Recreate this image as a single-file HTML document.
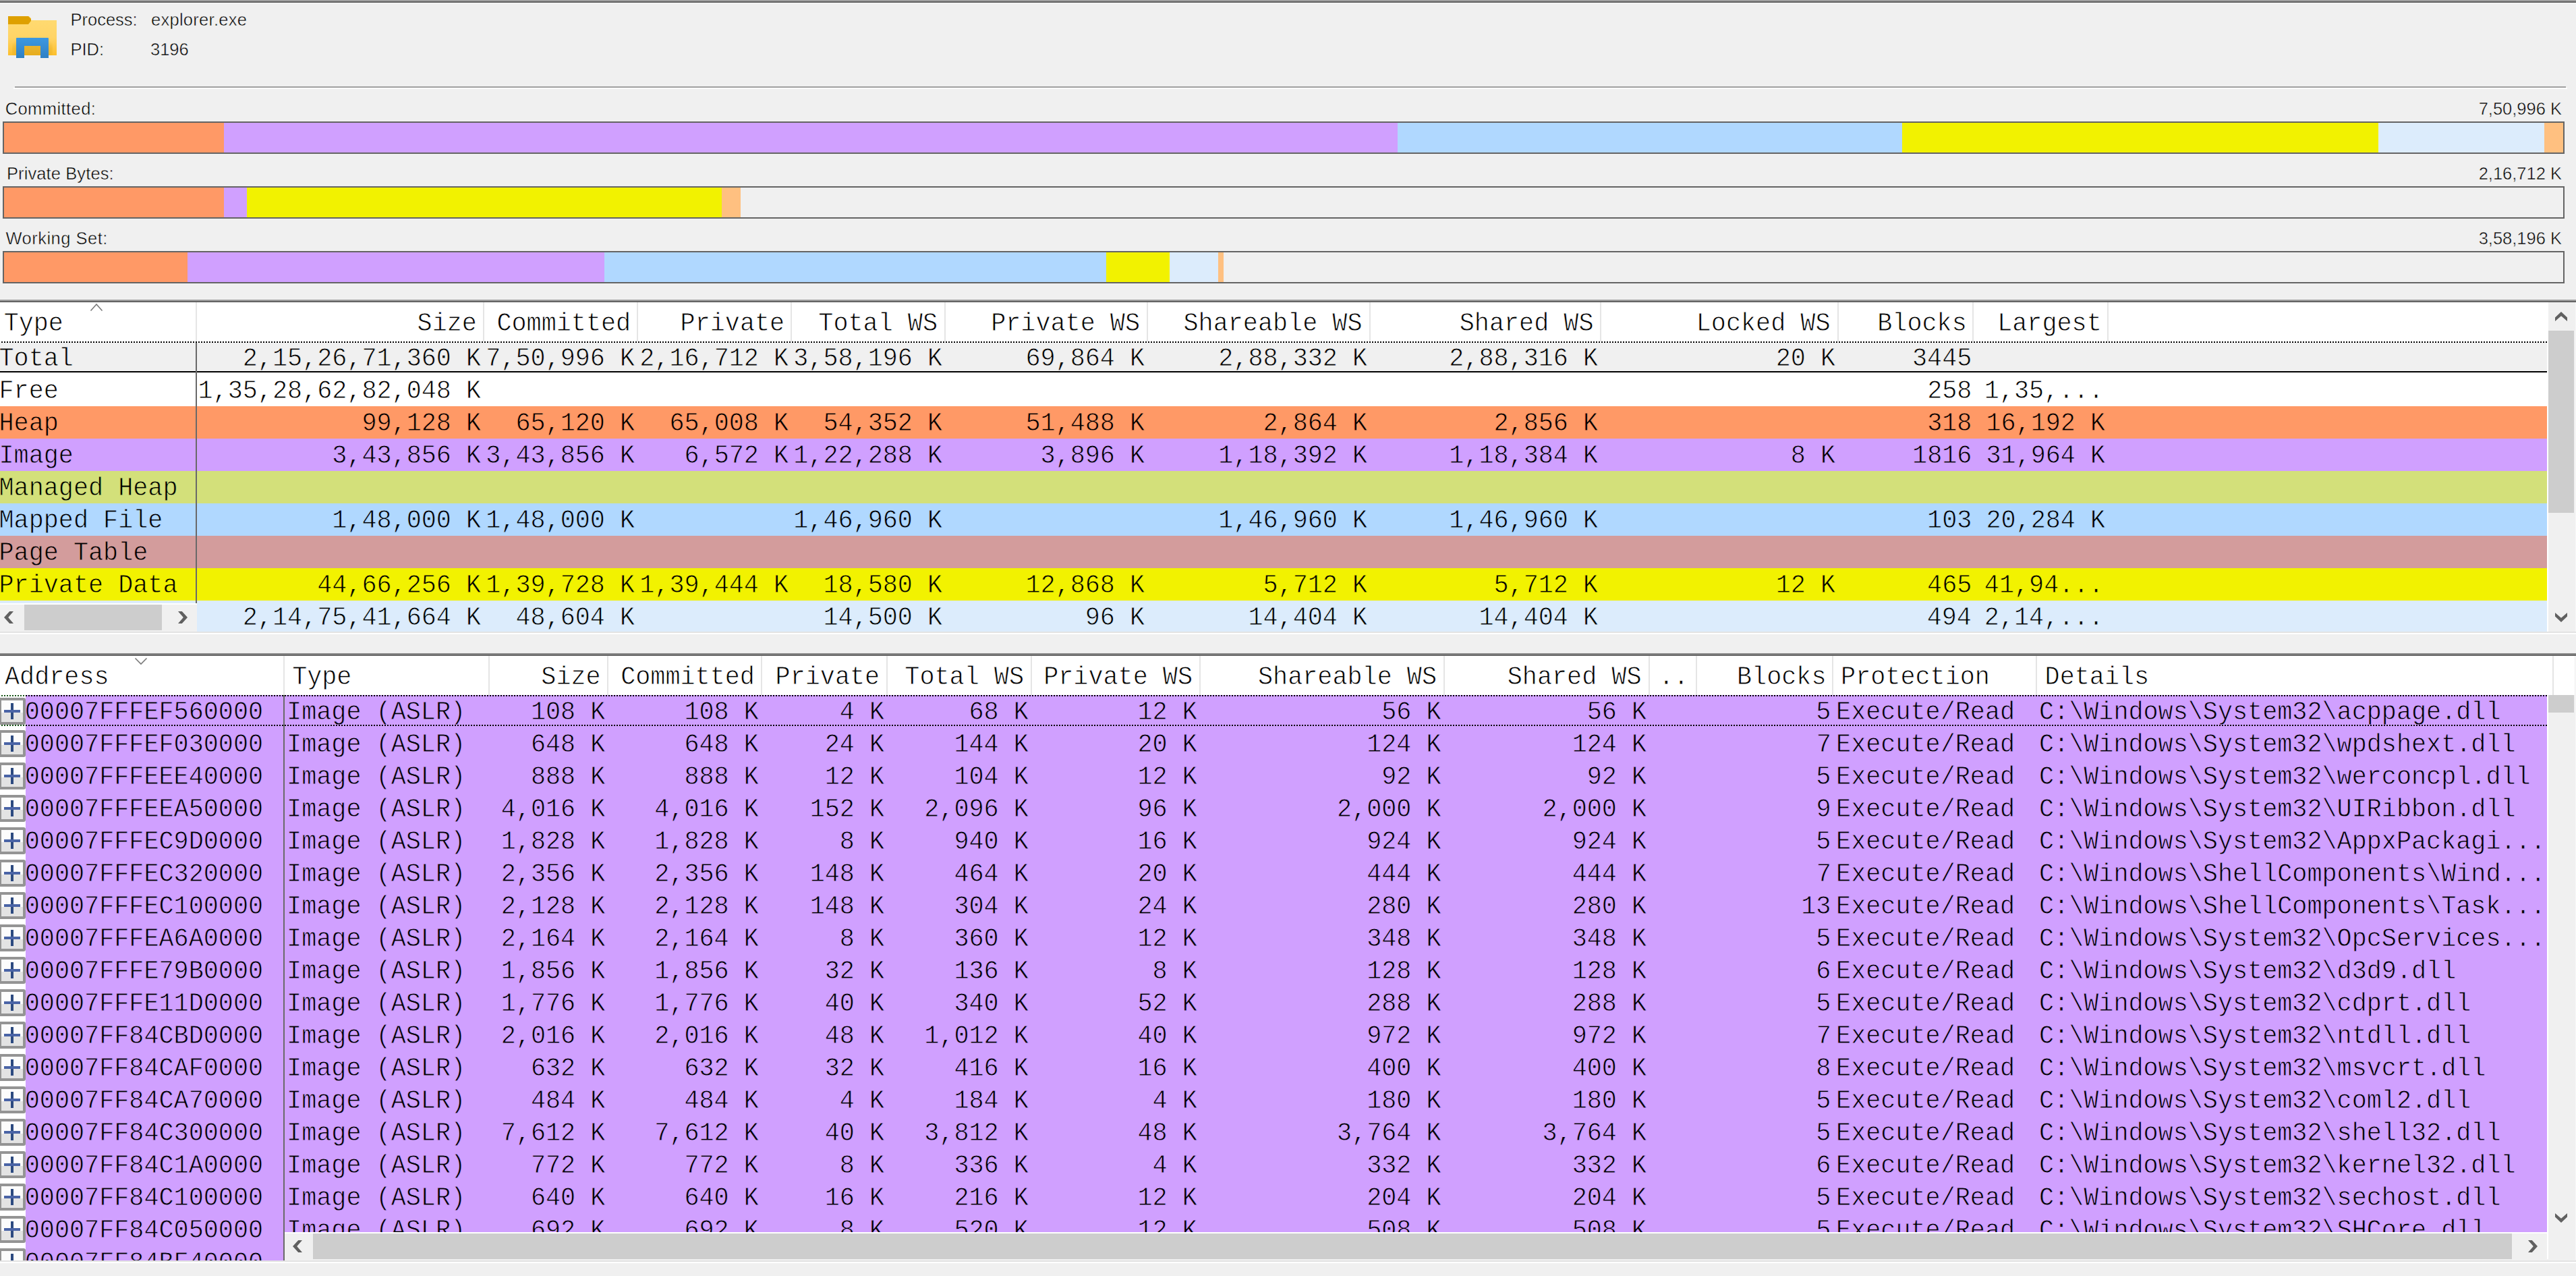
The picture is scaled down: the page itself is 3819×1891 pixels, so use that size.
<!DOCTYPE html>
<html><head><meta charset="utf-8"><title>VMMap</title><style>
html,body{margin:0;padding:0;}
body{width:3819px;height:1891px;overflow:hidden;position:relative;background:#f0f0f0;}
.r{position:absolute;}
.clip{position:absolute;overflow:hidden;}
.m{position:absolute;font-family:"Liberation Mono",monospace;font-size:36.8px;line-height:48px;height:48px;white-space:pre;color:#000;transform:scaleY(1.065);-webkit-text-stroke:0.75px var(--bg,#fff);transform-origin:0 33.79px;}
.s{position:absolute;font-family:"Liberation Sans",sans-serif;font-size:25.5px;line-height:30px;height:30px;white-space:pre;color:#000;-webkit-text-stroke:0.5px #f0f0f0;}
.dot{position:absolute;height:2px;background-image:linear-gradient(to right,#000 0,#000 2px,transparent 2px,transparent 4px);background-size:4px 2px;background-position:2px 0;}
.exp{position:absolute;width:40px;height:40px;box-sizing:border-box;border:4px solid #949494;border-radius:3px;background:linear-gradient(#fcfcfc 0,#fcfcfc 55%,#e3e3e3 55%,#e3e3e3 100%);}
.exp i{position:absolute;display:block;}
.exp .h{left:4px;top:14px;width:24px;height:4px;background:#4a64a6;}
.exp .v{left:14px;top:4px;width:4px;height:24px;background:#2c4a80;}
</style></head>
<body>
<div class="r" style="left:0px;top:0px;width:3819px;height:2px;background:#a0a0a0;"></div>
<div class="r" style="left:0px;top:2px;width:3819px;height:2px;background:#606060;"></div>
<div class="r" style="left:0px;top:4px;width:3819px;height:1px;background:#f8f8f8;"></div>
<svg class="r" style="left:0px;top:0px" width="100" height="100" viewBox="0 0 100 100">
<defs>
<linearGradient id="fb" x1="0" y1="0" x2="0" y2="1"><stop offset="0" stop-color="#ffdb73"/><stop offset="0.55" stop-color="#ffd466"/><stop offset="1" stop-color="#fcbf2c"/></linearGradient>
<linearGradient id="bl" x1="0" y1="0" x2="0" y2="1"><stop offset="0" stop-color="#3d98e0"/><stop offset="1" stop-color="#2f80c4"/></linearGradient>
<radialGradient id="sh" cx="0.5" cy="0.75" r="0.6"><stop offset="0.5" stop-color="#c08a00" stop-opacity="0.35"/><stop offset="1" stop-color="#c08a00" stop-opacity="0"/></radialGradient>
</defs>
<path d="M12 24 H43 L46 27 V30 H84 V82 H12 Z" fill="url(#fb)"/>
<path d="M12 24 H42 L46 28 V31 L42 36 H12 Z" fill="#dea000"/>
<rect x="18" y="50" width="60" height="32" fill="url(#sh)"/>
<path d="M24 57 Q24 56 25 56 H71 Q72 56 72 57 V86 H60 V68 H36 V86 H24 Z" fill="url(#bl)"/>
</svg>
<div class="s" style="left:104.50px;top:13.76px;">Process:</div>
<div class="s" style="left:224.00px;top:13.76px;letter-spacing:0.27px;">explorer.exe</div>
<div class="s" style="left:104.50px;top:57.66px;">PID:</div>
<div class="s" style="left:223.00px;top:57.66px;">3196</div>
<div class="r" style="left:20px;top:130px;width:3786px;height:2px;background:#ffffff;"></div>
<div class="r" style="left:22px;top:128px;width:3782px;height:2px;background:#a0a0a0;"></div>
<div class="s" style="left:7.70px;top:146.16px;letter-spacing:0.42px;">Committed:</div>
<div class="s" style="right:21.00px;top:146.16px;text-align:right;">7,50,996 K</div>
<div class="r" style="left:4px;top:180px;width:3798px;height:48px;box-sizing:border-box;border:2px solid #646464;background:#f0f0f0"></div>
<div class="r" style="left:6px;top:182px;width:326px;height:44px;background:#ff9966;"></div>
<div class="r" style="left:332px;top:182px;width:1740px;height:44px;background:#d0a0ff;"></div>
<div class="r" style="left:2072px;top:182px;width:748px;height:44px;background:#b0d8ff;"></div>
<div class="r" style="left:2820px;top:182px;width:706px;height:44px;background:#f2f200;"></div>
<div class="r" style="left:3526px;top:182px;width:246px;height:44px;background:#dcecfc;"></div>
<div class="r" style="left:3772px;top:182px;width:28px;height:44px;background:#ffc080;"></div>
<div class="s" style="left:10.00px;top:242.16px;letter-spacing:0.1px;">Private Bytes:</div>
<div class="s" style="right:21.00px;top:242.16px;text-align:right;">2,16,712 K</div>
<div class="r" style="left:4px;top:276px;width:3798px;height:48px;box-sizing:border-box;border:2px solid #646464;background:#f0f0f0"></div>
<div class="r" style="left:6px;top:278px;width:326px;height:44px;background:#ff9966;"></div>
<div class="r" style="left:332px;top:278px;width:34px;height:44px;background:#d0a0ff;"></div>
<div class="r" style="left:366px;top:278px;width:704px;height:44px;background:#f2f200;"></div>
<div class="r" style="left:1070px;top:278px;width:28px;height:44px;background:#ffc080;"></div>
<div class="s" style="left:8.40px;top:338.16px;letter-spacing:0.5px;">Working Set:</div>
<div class="s" style="right:21.00px;top:338.16px;text-align:right;">3,58,196 K</div>
<div class="r" style="left:4px;top:372px;width:3798px;height:48px;box-sizing:border-box;border:2px solid #646464;background:#f0f0f0"></div>
<div class="r" style="left:6px;top:374px;width:272px;height:44px;background:#ff9966;"></div>
<div class="r" style="left:278px;top:374px;width:618px;height:44px;background:#d0a0ff;"></div>
<div class="r" style="left:896px;top:374px;width:744px;height:44px;background:#b0d8ff;"></div>
<div class="r" style="left:1640px;top:374px;width:94px;height:44px;background:#f2f200;"></div>
<div class="r" style="left:1734px;top:374px;width:72px;height:44px;background:#dcecfc;"></div>
<div class="r" style="left:1806px;top:374px;width:8px;height:44px;background:#ffc080;"></div>
<div class="r" style="left:0px;top:444px;width:3819px;height:2px;background:#a0a0a0;"></div>
<div class="r" style="left:0px;top:446px;width:3819px;height:2px;background:#646464;"></div>
<div class="r" style="left:0px;top:448px;width:3778px;height:60px;background:#ffffff;"></div>
<div class="r" style="left:290px;top:448px;width:2px;height:58px;background:#e5e5e5;"></div>
<div class="r" style="left:716px;top:448px;width:2px;height:58px;background:#e5e5e5;"></div>
<div class="r" style="left:944px;top:448px;width:2px;height:58px;background:#e5e5e5;"></div>
<div class="r" style="left:1172px;top:448px;width:2px;height:58px;background:#e5e5e5;"></div>
<div class="r" style="left:1400px;top:448px;width:2px;height:58px;background:#e5e5e5;"></div>
<div class="r" style="left:1700px;top:448px;width:2px;height:58px;background:#e5e5e5;"></div>
<div class="r" style="left:2030px;top:448px;width:2px;height:58px;background:#e5e5e5;"></div>
<div class="r" style="left:2372px;top:448px;width:2px;height:58px;background:#e5e5e5;"></div>
<div class="r" style="left:2724px;top:448px;width:2px;height:58px;background:#e5e5e5;"></div>
<div class="r" style="left:2924px;top:448px;width:2px;height:58px;background:#e5e5e5;"></div>
<div class="r" style="left:3124px;top:448px;width:2px;height:58px;background:#e5e5e5;"></div>
<div class="dot" style="left:0px;top:506px;width:3776px;"></div>
<div class="m" style="left:5.63px;top:456.21px;">Type</div>
<div class="m" style="right:3112.12px;top:456.21px;text-align:right;">Size</div>
<div class="m" style="right:2883.82px;top:456.21px;text-align:right;">Committed</div>
<div class="m" style="right:2655.87px;top:456.21px;text-align:right;">Private</div>
<div class="m" style="right:2428.99px;top:456.21px;text-align:right;">Total WS</div>
<div class="m" style="right:2128.99px;top:456.21px;text-align:right;">Private WS</div>
<div class="m" style="right:1799.49px;top:456.21px;text-align:right;">Shareable WS</div>
<div class="m" style="right:1456.49px;top:456.21px;text-align:right;">Shared WS</div>
<div class="m" style="right:1105.49px;top:456.21px;text-align:right;">Locked WS</div>
<div class="m" style="right:903.26px;top:456.21px;text-align:right;">Blocks</div>
<div class="m" style="right:703.24px;top:456.21px;text-align:right;">Largest</div>
<svg class="r" style="left:132px;top:448px" width="22" height="14" viewBox="0 0 22 14"><path d="M2.5 12.5 L11 3 L19.5 12.5" fill="none" stroke="#7a7a7a" stroke-width="1.6"/></svg>
<div class="r" style="left:0px;top:508px;width:3776px;height:42px;background:#f0f0f0;"></div>
<div class="r" style="left:0px;top:552px;width:3776px;height:50px;background:#ffffff;"></div>
<div class="r" style="left:0px;top:602px;width:3776px;height:48px;background:#ff9966;"></div>
<div class="r" style="left:0px;top:650px;width:3776px;height:48px;background:#d0a0ff;"></div>
<div class="r" style="left:0px;top:698px;width:3776px;height:48px;background:#d3e07a;"></div>
<div class="r" style="left:0px;top:746px;width:3776px;height:48px;background:#b0d8ff;"></div>
<div class="r" style="left:0px;top:794px;width:3776px;height:48px;background:#d39c9c;"></div>
<div class="r" style="left:0px;top:842px;width:3776px;height:48px;background:#f2f200;"></div>
<div class="r" style="left:0px;top:890px;width:3776px;height:46px;background:#dcecfc;"></div>
<div class="r" style="left:0px;top:550px;width:3776px;height:2px;background:#000000;"></div>
<div class="r" style="left:290px;top:508px;width:2px;height:386px;background:#696969;"></div>
<div class="m" style="left:-1.50px;top:508.21px;--bg:#f0f0f0;">Total</div>
<div class="m" style="right:3105.96px;top:508.21px;text-align:right;--bg:#f0f0f0;">2,15,26,71,360 K</div>
<div class="m" style="right:2877.96px;top:508.21px;text-align:right;--bg:#f0f0f0;">7,50,996 K</div>
<div class="m" style="right:2649.96px;top:508.21px;text-align:right;--bg:#f0f0f0;">2,16,712 K</div>
<div class="m" style="right:2421.96px;top:508.21px;text-align:right;--bg:#f0f0f0;">3,58,196 K</div>
<div class="m" style="right:2121.96px;top:508.21px;text-align:right;--bg:#f0f0f0;">69,864 K</div>
<div class="m" style="right:1791.96px;top:508.21px;text-align:right;--bg:#f0f0f0;">2,88,332 K</div>
<div class="m" style="right:1449.96px;top:508.21px;text-align:right;--bg:#f0f0f0;">2,88,316 K</div>
<div class="m" style="right:1097.96px;top:508.21px;text-align:right;--bg:#f0f0f0;">20 K</div>
<div class="m" style="right:895.66px;top:508.21px;text-align:right;--bg:#f0f0f0;">3445</div>
<div class="m" style="left:-1.50px;top:556.21px;--bg:#ffffff;">Free</div>
<div class="m" style="right:3105.96px;top:556.21px;text-align:right;--bg:#ffffff;">1,35,28,62,82,048 K</div>
<div class="m" style="right:895.57px;top:556.21px;text-align:right;--bg:#ffffff;">258</div>
<div class="m" style="right:700.50px;top:556.21px;text-align:right;--bg:#ffffff;">1,35,...</div>
<div class="m" style="left:-1.50px;top:604.21px;--bg:#ff9966;">Heap</div>
<div class="m" style="right:3105.96px;top:604.21px;text-align:right;--bg:#ff9966;">99,128 K</div>
<div class="m" style="right:2877.96px;top:604.21px;text-align:right;--bg:#ff9966;">65,120 K</div>
<div class="m" style="right:2649.96px;top:604.21px;text-align:right;--bg:#ff9966;">65,008 K</div>
<div class="m" style="right:2421.96px;top:604.21px;text-align:right;--bg:#ff9966;">54,352 K</div>
<div class="m" style="right:2121.96px;top:604.21px;text-align:right;--bg:#ff9966;">51,488 K</div>
<div class="m" style="right:1791.96px;top:604.21px;text-align:right;--bg:#ff9966;">2,864 K</div>
<div class="m" style="right:1449.96px;top:604.21px;text-align:right;--bg:#ff9966;">2,856 K</div>
<div class="m" style="right:895.57px;top:604.21px;text-align:right;--bg:#ff9966;">318</div>
<div class="m" style="right:697.96px;top:604.21px;text-align:right;--bg:#ff9966;">16,192 K</div>
<div class="m" style="left:-1.50px;top:652.21px;--bg:#d0a0ff;">Image</div>
<div class="m" style="right:3105.96px;top:652.21px;text-align:right;--bg:#d0a0ff;">3,43,856 K</div>
<div class="m" style="right:2877.96px;top:652.21px;text-align:right;--bg:#d0a0ff;">3,43,856 K</div>
<div class="m" style="right:2649.96px;top:652.21px;text-align:right;--bg:#d0a0ff;">6,572 K</div>
<div class="m" style="right:2421.96px;top:652.21px;text-align:right;--bg:#d0a0ff;">1,22,288 K</div>
<div class="m" style="right:2121.96px;top:652.21px;text-align:right;--bg:#d0a0ff;">3,896 K</div>
<div class="m" style="right:1791.96px;top:652.21px;text-align:right;--bg:#d0a0ff;">1,18,392 K</div>
<div class="m" style="right:1449.96px;top:652.21px;text-align:right;--bg:#d0a0ff;">1,18,384 K</div>
<div class="m" style="right:1097.96px;top:652.21px;text-align:right;--bg:#d0a0ff;">8 K</div>
<div class="m" style="right:895.61px;top:652.21px;text-align:right;--bg:#d0a0ff;">1816</div>
<div class="m" style="right:697.96px;top:652.21px;text-align:right;--bg:#d0a0ff;">31,964 K</div>
<div class="m" style="left:-1.50px;top:700.21px;--bg:#d3e07a;">Managed Heap</div>
<div class="m" style="left:-1.50px;top:748.21px;--bg:#b0d8ff;">Mapped File</div>
<div class="m" style="right:3105.96px;top:748.21px;text-align:right;--bg:#b0d8ff;">1,48,000 K</div>
<div class="m" style="right:2877.96px;top:748.21px;text-align:right;--bg:#b0d8ff;">1,48,000 K</div>
<div class="m" style="right:2421.96px;top:748.21px;text-align:right;--bg:#b0d8ff;">1,46,960 K</div>
<div class="m" style="right:1791.96px;top:748.21px;text-align:right;--bg:#b0d8ff;">1,46,960 K</div>
<div class="m" style="right:1449.96px;top:748.21px;text-align:right;--bg:#b0d8ff;">1,46,960 K</div>
<div class="m" style="right:895.66px;top:748.21px;text-align:right;--bg:#b0d8ff;">103</div>
<div class="m" style="right:697.96px;top:748.21px;text-align:right;--bg:#b0d8ff;">20,284 K</div>
<div class="m" style="left:-1.50px;top:796.21px;--bg:#d39c9c;">Page Table</div>
<div class="m" style="left:-1.50px;top:844.21px;--bg:#f2f200;">Private Data</div>
<div class="m" style="right:3105.96px;top:844.21px;text-align:right;--bg:#f2f200;">44,66,256 K</div>
<div class="m" style="right:2877.96px;top:844.21px;text-align:right;--bg:#f2f200;">1,39,728 K</div>
<div class="m" style="right:2649.96px;top:844.21px;text-align:right;--bg:#f2f200;">1,39,444 K</div>
<div class="m" style="right:2421.96px;top:844.21px;text-align:right;--bg:#f2f200;">18,580 K</div>
<div class="m" style="right:2121.96px;top:844.21px;text-align:right;--bg:#f2f200;">12,868 K</div>
<div class="m" style="right:1791.96px;top:844.21px;text-align:right;--bg:#f2f200;">5,712 K</div>
<div class="m" style="right:1449.96px;top:844.21px;text-align:right;--bg:#f2f200;">5,712 K</div>
<div class="m" style="right:1097.96px;top:844.21px;text-align:right;--bg:#f2f200;">12 K</div>
<div class="m" style="right:895.66px;top:844.21px;text-align:right;--bg:#f2f200;">465</div>
<div class="m" style="right:700.50px;top:844.21px;text-align:right;--bg:#f2f200;">41,94...</div>
<div class="m" style="right:3105.96px;top:892.21px;text-align:right;--bg:#dcecfc;">2,14,75,41,664 K</div>
<div class="m" style="right:2877.96px;top:892.21px;text-align:right;--bg:#dcecfc;">48,604 K</div>
<div class="m" style="right:2421.96px;top:892.21px;text-align:right;--bg:#dcecfc;">14,500 K</div>
<div class="m" style="right:2121.96px;top:892.21px;text-align:right;--bg:#dcecfc;">96 K</div>
<div class="m" style="right:1791.96px;top:892.21px;text-align:right;--bg:#dcecfc;">14,404 K</div>
<div class="m" style="right:1449.96px;top:892.21px;text-align:right;--bg:#dcecfc;">14,404 K</div>
<div class="m" style="right:896.13px;top:892.21px;text-align:right;--bg:#dcecfc;">494</div>
<div class="m" style="right:700.50px;top:892.21px;text-align:right;--bg:#dcecfc;">2,14,...</div>
<div class="r" style="left:0px;top:894px;width:292px;height:2px;background:#ffffff;"></div>
<div class="r" style="left:0px;top:896px;width:292px;height:40px;background:#f0f0f0;"></div>
<div class="r" style="left:36px;top:896px;width:204px;height:38px;background:#cdcdcd;"></div>
<svg class="r" style="left:6px;top:906px" width="14" height="18" viewBox="0 0 14 18"><polygon points="8.2,0 14,0 6.2,9 14,18 8.2,18 0,9" fill="#606060"/></svg>
<svg class="r" style="left:264px;top:906px" width="14" height="18" viewBox="0 0 14 18"><polygon points="0,0 5.8,0 14,9 5.8,18 0,18 7.8,9" fill="#606060"/></svg>
<div class="r" style="left:3776px;top:448px;width:2px;height:488px;background:#ffffff;"></div>
<div class="r" style="left:3778px;top:448px;width:40px;height:488px;background:#f0f0f0;"></div>
<div class="r" style="left:3818px;top:448px;width:1px;height:488px;background:#f8f8f8;"></div>
<div class="r" style="left:3778px;top:490px;width:38px;height:270px;background:#cdcdcd;"></div>
<svg class="r" style="left:3788px;top:462px" width="18" height="14" viewBox="0 0 18 14"><polygon points="0,8.4 9,0 18,8.4 18,14 9,6.2 0,14" fill="#606060"/></svg>
<svg class="r" style="left:3788px;top:908px" width="18" height="14" viewBox="0 0 18 14"><polygon points="0,0 9,7.8 18,0 18,5.6 9,14 0,5.6" fill="#606060"/></svg>
<div class="r" style="left:0px;top:936px;width:3819px;height:2px;background:#e3e3e3;"></div>
<div class="r" style="left:0px;top:938px;width:3819px;height:2px;background:#ffffff;"></div>
<div class="r" style="left:0px;top:940px;width:3819px;height:28px;background:#f0f0f0;"></div>
<div class="r" style="left:0px;top:968px;width:3819px;height:2px;background:#8a8a8a;"></div>
<div class="r" style="left:0px;top:970px;width:3819px;height:2px;background:#646464;"></div>
<div class="r" style="left:0px;top:972px;width:3817px;height:58px;background:#ffffff;"></div>
<div class="r" style="left:420.25px;top:972px;width:2.0px;height:58px;background:#e5e5e5;"></div>
<div class="r" style="left:724px;top:972px;width:2px;height:58px;background:#e5e5e5;"></div>
<div class="r" style="left:900.25px;top:972px;width:2.0px;height:58px;background:#e5e5e5;"></div>
<div class="r" style="left:1127.75px;top:972px;width:2.0px;height:58px;background:#e5e5e5;"></div>
<div class="r" style="left:1314px;top:972px;width:2px;height:58px;background:#e5e5e5;"></div>
<div class="r" style="left:1527.75px;top:972px;width:2.0px;height:58px;background:#e5e5e5;"></div>
<div class="r" style="left:1777.75px;top:972px;width:2.0px;height:58px;background:#e5e5e5;"></div>
<div class="r" style="left:2139.5px;top:972px;width:2.0px;height:58px;background:#e5e5e5;"></div>
<div class="r" style="left:2444px;top:972px;width:2px;height:58px;background:#e5e5e5;"></div>
<div class="r" style="left:2514px;top:972px;width:2px;height:58px;background:#e5e5e5;"></div>
<div class="r" style="left:2716px;top:972px;width:2px;height:58px;background:#e5e5e5;"></div>
<div class="r" style="left:3017.75px;top:972px;width:2.0px;height:58px;background:#e5e5e5;"></div>
<div class="r" style="left:3784px;top:972px;width:2px;height:58px;background:#e5e5e5;"></div>
<div class="m" style="left:7.00px;top:980.21px;">Address</div>
<div class="m" style="left:433.13px;top:980.21px;">Type</div>
<div class="m" style="right:2928.37px;top:980.21px;text-align:right;">Size</div>
<div class="m" style="right:2700.07px;top:980.21px;text-align:right;">Committed</div>
<div class="m" style="right:2514.87px;top:980.21px;text-align:right;">Private</div>
<div class="m" style="right:2300.99px;top:980.21px;text-align:right;">Total WS</div>
<div class="m" style="right:2050.99px;top:980.21px;text-align:right;">Private WS</div>
<div class="m" style="right:1688.99px;top:980.21px;text-align:right;">Shareable WS</div>
<div class="m" style="right:1385.49px;top:980.21px;text-align:right;">Shared WS</div>
<div class="m" style="right:1315.60px;top:980.21px;text-align:right;">..</div>
<div class="m" style="right:1111.51px;top:980.21px;text-align:right;">Blocks</div>
<div class="m" style="left:2729.09px;top:980.21px;">Protection</div>
<div class="m" style="left:3031.59px;top:980.21px;">Details</div>
<svg class="r" style="left:198px;top:973px" width="22" height="14" viewBox="0 0 22 14"><path d="M2.5 2.5 L11 11 L19.5 2.5" fill="none" stroke="#7a7a7a" stroke-width="1.6"/></svg>
<div class="r" style="left:0px;top:1030px;width:38px;height:838px;background:#ffffff;"></div>
<div class="clip" style="left:38px;top:1030px;width:3738px;height:796px;background:#d0a0ff"></div>
<div class="clip" style="left:0px;top:1030px;width:422px;height:838px;--bg:#d0a0ff;">
<div class="r" style="left:38px;top:0px;width:384px;height:838px;background:#d0a0ff"></div>
<div class="exp" style="left:-2px;top:4px;"><i class="v"></i><i class="h"></i></div>
<div class="m" style="left:36.77px;top:1.51px;">00007FFFEF560000</div>
<div class="exp" style="left:-2px;top:52px;"><i class="v"></i><i class="h"></i></div>
<div class="m" style="left:36.77px;top:49.51px;">00007FFFEF030000</div>
<div class="exp" style="left:-2px;top:100px;"><i class="v"></i><i class="h"></i></div>
<div class="m" style="left:36.77px;top:97.51px;">00007FFFEEE40000</div>
<div class="exp" style="left:-2px;top:148px;"><i class="v"></i><i class="h"></i></div>
<div class="m" style="left:36.77px;top:145.51px;">00007FFFEEA50000</div>
<div class="exp" style="left:-2px;top:196px;"><i class="v"></i><i class="h"></i></div>
<div class="m" style="left:36.77px;top:193.51px;">00007FFFEC9D0000</div>
<div class="exp" style="left:-2px;top:244px;"><i class="v"></i><i class="h"></i></div>
<div class="m" style="left:36.77px;top:241.51px;">00007FFFEC320000</div>
<div class="exp" style="left:-2px;top:292px;"><i class="v"></i><i class="h"></i></div>
<div class="m" style="left:36.77px;top:289.51px;">00007FFFEC100000</div>
<div class="exp" style="left:-2px;top:340px;"><i class="v"></i><i class="h"></i></div>
<div class="m" style="left:36.77px;top:337.51px;">00007FFFEA6A0000</div>
<div class="exp" style="left:-2px;top:388px;"><i class="v"></i><i class="h"></i></div>
<div class="m" style="left:36.77px;top:385.51px;">00007FFFE79B0000</div>
<div class="exp" style="left:-2px;top:436px;"><i class="v"></i><i class="h"></i></div>
<div class="m" style="left:36.77px;top:433.51px;">00007FFFE11D0000</div>
<div class="exp" style="left:-2px;top:484px;"><i class="v"></i><i class="h"></i></div>
<div class="m" style="left:36.77px;top:481.51px;">00007FF84CBD0000</div>
<div class="exp" style="left:-2px;top:532px;"><i class="v"></i><i class="h"></i></div>
<div class="m" style="left:36.77px;top:529.51px;">00007FF84CAF0000</div>
<div class="exp" style="left:-2px;top:580px;"><i class="v"></i><i class="h"></i></div>
<div class="m" style="left:36.77px;top:577.51px;">00007FF84CA70000</div>
<div class="exp" style="left:-2px;top:628px;"><i class="v"></i><i class="h"></i></div>
<div class="m" style="left:36.77px;top:625.51px;">00007FF84C300000</div>
<div class="exp" style="left:-2px;top:676px;"><i class="v"></i><i class="h"></i></div>
<div class="m" style="left:36.77px;top:673.51px;">00007FF84C1A0000</div>
<div class="exp" style="left:-2px;top:724px;"><i class="v"></i><i class="h"></i></div>
<div class="m" style="left:36.77px;top:721.51px;">00007FF84C100000</div>
<div class="exp" style="left:-2px;top:772px;"><i class="v"></i><i class="h"></i></div>
<div class="m" style="left:36.77px;top:769.51px;">00007FF84C050000</div>
<div class="exp" style="left:-2px;top:820px;"><i class="v"></i><i class="h"></i></div>
<div class="m" style="left:36.77px;top:817.51px;">00007FF84BF40000</div>
<div class="r" style="left:420px;top:0px;width:2px;height:838px;background:#696969"></div>
</div>
<div class="clip" style="left:422px;top:1030px;width:3354px;height:796px;--bg:#d0a0ff;">
<div class="m" style="left:3.12px;top:1.51px;">Image (ASLR)</div>
<div class="m" style="right:2878.71px;top:1.51px;text-align:right">108 K</div>
<div class="m" style="right:2651.21px;top:1.51px;text-align:right">108 K</div>
<div class="m" style="right:2464.96px;top:1.51px;text-align:right">4 K</div>
<div class="m" style="right:2251.21px;top:1.51px;text-align:right">68 K</div>
<div class="m" style="right:2001.21px;top:1.51px;text-align:right">12 K</div>
<div class="m" style="right:1639.46px;top:1.51px;text-align:right">56 K</div>
<div class="m" style="right:1334.96px;top:1.51px;text-align:right">56 K</div>
<div class="m" style="right:1061.66px;top:1.51px;text-align:right">5</div>
<div class="m" style="left:2300.09px;top:1.51px;">Execute/Read</div>
<div class="m" style="left:2600.97px;top:1.51px;">C:\Windows\System32\acppage.dll</div>
<div class="m" style="left:3.12px;top:49.51px;">Image (ASLR)</div>
<div class="m" style="right:2878.71px;top:49.51px;text-align:right">648 K</div>
<div class="m" style="right:2651.21px;top:49.51px;text-align:right">648 K</div>
<div class="m" style="right:2464.96px;top:49.51px;text-align:right">24 K</div>
<div class="m" style="right:2251.21px;top:49.51px;text-align:right">144 K</div>
<div class="m" style="right:2001.21px;top:49.51px;text-align:right">20 K</div>
<div class="m" style="right:1639.46px;top:49.51px;text-align:right">124 K</div>
<div class="m" style="right:1334.96px;top:49.51px;text-align:right">124 K</div>
<div class="m" style="right:1061.12px;top:49.51px;text-align:right">7</div>
<div class="m" style="left:2300.09px;top:49.51px;">Execute/Read</div>
<div class="m" style="left:2600.97px;top:49.51px;">C:\Windows\System32\wpdshext.dll</div>
<div class="m" style="left:3.12px;top:97.51px;">Image (ASLR)</div>
<div class="m" style="right:2878.71px;top:97.51px;text-align:right">888 K</div>
<div class="m" style="right:2651.21px;top:97.51px;text-align:right">888 K</div>
<div class="m" style="right:2464.96px;top:97.51px;text-align:right">12 K</div>
<div class="m" style="right:2251.21px;top:97.51px;text-align:right">104 K</div>
<div class="m" style="right:2001.21px;top:97.51px;text-align:right">12 K</div>
<div class="m" style="right:1639.46px;top:97.51px;text-align:right">92 K</div>
<div class="m" style="right:1334.96px;top:97.51px;text-align:right">92 K</div>
<div class="m" style="right:1061.66px;top:97.51px;text-align:right">5</div>
<div class="m" style="left:2300.09px;top:97.51px;">Execute/Read</div>
<div class="m" style="left:2600.97px;top:97.51px;">C:\Windows\System32\werconcpl.dll</div>
<div class="m" style="left:3.12px;top:145.51px;">Image (ASLR)</div>
<div class="m" style="right:2878.71px;top:145.51px;text-align:right">4,016 K</div>
<div class="m" style="right:2651.21px;top:145.51px;text-align:right">4,016 K</div>
<div class="m" style="right:2464.96px;top:145.51px;text-align:right">152 K</div>
<div class="m" style="right:2251.21px;top:145.51px;text-align:right">2,096 K</div>
<div class="m" style="right:2001.21px;top:145.51px;text-align:right">96 K</div>
<div class="m" style="right:1639.46px;top:145.51px;text-align:right">2,000 K</div>
<div class="m" style="right:1334.96px;top:145.51px;text-align:right">2,000 K</div>
<div class="m" style="right:1061.45px;top:145.51px;text-align:right">9</div>
<div class="m" style="left:2300.09px;top:145.51px;">Execute/Read</div>
<div class="m" style="left:2600.97px;top:145.51px;">C:\Windows\System32\UIRibbon.dll</div>
<div class="m" style="left:3.12px;top:193.51px;">Image (ASLR)</div>
<div class="m" style="right:2878.71px;top:193.51px;text-align:right">1,828 K</div>
<div class="m" style="right:2651.21px;top:193.51px;text-align:right">1,828 K</div>
<div class="m" style="right:2464.96px;top:193.51px;text-align:right">8 K</div>
<div class="m" style="right:2251.21px;top:193.51px;text-align:right">940 K</div>
<div class="m" style="right:2001.21px;top:193.51px;text-align:right">16 K</div>
<div class="m" style="right:1639.46px;top:193.51px;text-align:right">924 K</div>
<div class="m" style="right:1334.96px;top:193.51px;text-align:right">924 K</div>
<div class="m" style="right:1061.66px;top:193.51px;text-align:right">5</div>
<div class="m" style="left:2300.09px;top:193.51px;">Execute/Read</div>
<div class="m" style="left:2600.97px;top:193.51px;">C:\Windows\System32\AppxPackagi...</div>
<div class="m" style="left:3.12px;top:241.51px;">Image (ASLR)</div>
<div class="m" style="right:2878.71px;top:241.51px;text-align:right">2,356 K</div>
<div class="m" style="right:2651.21px;top:241.51px;text-align:right">2,356 K</div>
<div class="m" style="right:2464.96px;top:241.51px;text-align:right">148 K</div>
<div class="m" style="right:2251.21px;top:241.51px;text-align:right">464 K</div>
<div class="m" style="right:2001.21px;top:241.51px;text-align:right">20 K</div>
<div class="m" style="right:1639.46px;top:241.51px;text-align:right">444 K</div>
<div class="m" style="right:1334.96px;top:241.51px;text-align:right">444 K</div>
<div class="m" style="right:1061.12px;top:241.51px;text-align:right">7</div>
<div class="m" style="left:2300.09px;top:241.51px;">Execute/Read</div>
<div class="m" style="left:2600.97px;top:241.51px;">C:\Windows\ShellComponents\Wind...</div>
<div class="m" style="left:3.12px;top:289.51px;">Image (ASLR)</div>
<div class="m" style="right:2878.71px;top:289.51px;text-align:right">2,128 K</div>
<div class="m" style="right:2651.21px;top:289.51px;text-align:right">2,128 K</div>
<div class="m" style="right:2464.96px;top:289.51px;text-align:right">148 K</div>
<div class="m" style="right:2251.21px;top:289.51px;text-align:right">304 K</div>
<div class="m" style="right:2001.21px;top:289.51px;text-align:right">24 K</div>
<div class="m" style="right:1639.46px;top:289.51px;text-align:right">280 K</div>
<div class="m" style="right:1334.96px;top:289.51px;text-align:right">280 K</div>
<div class="m" style="right:1061.66px;top:289.51px;text-align:right">13</div>
<div class="m" style="left:2300.09px;top:289.51px;">Execute/Read</div>
<div class="m" style="left:2600.97px;top:289.51px;">C:\Windows\ShellComponents\Task...</div>
<div class="m" style="left:3.12px;top:337.51px;">Image (ASLR)</div>
<div class="m" style="right:2878.71px;top:337.51px;text-align:right">2,164 K</div>
<div class="m" style="right:2651.21px;top:337.51px;text-align:right">2,164 K</div>
<div class="m" style="right:2464.96px;top:337.51px;text-align:right">8 K</div>
<div class="m" style="right:2251.21px;top:337.51px;text-align:right">360 K</div>
<div class="m" style="right:2001.21px;top:337.51px;text-align:right">12 K</div>
<div class="m" style="right:1639.46px;top:337.51px;text-align:right">348 K</div>
<div class="m" style="right:1334.96px;top:337.51px;text-align:right">348 K</div>
<div class="m" style="right:1061.66px;top:337.51px;text-align:right">5</div>
<div class="m" style="left:2300.09px;top:337.51px;">Execute/Read</div>
<div class="m" style="left:2600.97px;top:337.51px;">C:\Windows\System32\OpcServices...</div>
<div class="m" style="left:3.12px;top:385.51px;">Image (ASLR)</div>
<div class="m" style="right:2878.71px;top:385.51px;text-align:right">1,856 K</div>
<div class="m" style="right:2651.21px;top:385.51px;text-align:right">1,856 K</div>
<div class="m" style="right:2464.96px;top:385.51px;text-align:right">32 K</div>
<div class="m" style="right:2251.21px;top:385.51px;text-align:right">136 K</div>
<div class="m" style="right:2001.21px;top:385.51px;text-align:right">8 K</div>
<div class="m" style="right:1639.46px;top:385.51px;text-align:right">128 K</div>
<div class="m" style="right:1334.96px;top:385.51px;text-align:right">128 K</div>
<div class="m" style="right:1061.61px;top:385.51px;text-align:right">6</div>
<div class="m" style="left:2300.09px;top:385.51px;">Execute/Read</div>
<div class="m" style="left:2600.97px;top:385.51px;">C:\Windows\System32\d3d9.dll</div>
<div class="m" style="left:3.12px;top:433.51px;">Image (ASLR)</div>
<div class="m" style="right:2878.71px;top:433.51px;text-align:right">1,776 K</div>
<div class="m" style="right:2651.21px;top:433.51px;text-align:right">1,776 K</div>
<div class="m" style="right:2464.96px;top:433.51px;text-align:right">40 K</div>
<div class="m" style="right:2251.21px;top:433.51px;text-align:right">340 K</div>
<div class="m" style="right:2001.21px;top:433.51px;text-align:right">52 K</div>
<div class="m" style="right:1639.46px;top:433.51px;text-align:right">288 K</div>
<div class="m" style="right:1334.96px;top:433.51px;text-align:right">288 K</div>
<div class="m" style="right:1061.66px;top:433.51px;text-align:right">5</div>
<div class="m" style="left:2300.09px;top:433.51px;">Execute/Read</div>
<div class="m" style="left:2600.97px;top:433.51px;">C:\Windows\System32\cdprt.dll</div>
<div class="m" style="left:3.12px;top:481.51px;">Image (ASLR)</div>
<div class="m" style="right:2878.71px;top:481.51px;text-align:right">2,016 K</div>
<div class="m" style="right:2651.21px;top:481.51px;text-align:right">2,016 K</div>
<div class="m" style="right:2464.96px;top:481.51px;text-align:right">48 K</div>
<div class="m" style="right:2251.21px;top:481.51px;text-align:right">1,012 K</div>
<div class="m" style="right:2001.21px;top:481.51px;text-align:right">40 K</div>
<div class="m" style="right:1639.46px;top:481.51px;text-align:right">972 K</div>
<div class="m" style="right:1334.96px;top:481.51px;text-align:right">972 K</div>
<div class="m" style="right:1061.12px;top:481.51px;text-align:right">7</div>
<div class="m" style="left:2300.09px;top:481.51px;">Execute/Read</div>
<div class="m" style="left:2600.97px;top:481.51px;">C:\Windows\System32\ntdll.dll</div>
<div class="m" style="left:3.12px;top:529.51px;">Image (ASLR)</div>
<div class="m" style="right:2878.71px;top:529.51px;text-align:right">632 K</div>
<div class="m" style="right:2651.21px;top:529.51px;text-align:right">632 K</div>
<div class="m" style="right:2464.96px;top:529.51px;text-align:right">32 K</div>
<div class="m" style="right:2251.21px;top:529.51px;text-align:right">416 K</div>
<div class="m" style="right:2001.21px;top:529.51px;text-align:right">16 K</div>
<div class="m" style="right:1639.46px;top:529.51px;text-align:right">400 K</div>
<div class="m" style="right:1334.96px;top:529.51px;text-align:right">400 K</div>
<div class="m" style="right:1061.57px;top:529.51px;text-align:right">8</div>
<div class="m" style="left:2300.09px;top:529.51px;">Execute/Read</div>
<div class="m" style="left:2600.97px;top:529.51px;">C:\Windows\System32\msvcrt.dll</div>
<div class="m" style="left:3.12px;top:577.51px;">Image (ASLR)</div>
<div class="m" style="right:2878.71px;top:577.51px;text-align:right">484 K</div>
<div class="m" style="right:2651.21px;top:577.51px;text-align:right">484 K</div>
<div class="m" style="right:2464.96px;top:577.51px;text-align:right">4 K</div>
<div class="m" style="right:2251.21px;top:577.51px;text-align:right">184 K</div>
<div class="m" style="right:2001.21px;top:577.51px;text-align:right">4 K</div>
<div class="m" style="right:1639.46px;top:577.51px;text-align:right">180 K</div>
<div class="m" style="right:1334.96px;top:577.51px;text-align:right">180 K</div>
<div class="m" style="right:1061.66px;top:577.51px;text-align:right">5</div>
<div class="m" style="left:2300.09px;top:577.51px;">Execute/Read</div>
<div class="m" style="left:2600.97px;top:577.51px;">C:\Windows\System32\coml2.dll</div>
<div class="m" style="left:3.12px;top:625.51px;">Image (ASLR)</div>
<div class="m" style="right:2878.71px;top:625.51px;text-align:right">7,612 K</div>
<div class="m" style="right:2651.21px;top:625.51px;text-align:right">7,612 K</div>
<div class="m" style="right:2464.96px;top:625.51px;text-align:right">40 K</div>
<div class="m" style="right:2251.21px;top:625.51px;text-align:right">3,812 K</div>
<div class="m" style="right:2001.21px;top:625.51px;text-align:right">48 K</div>
<div class="m" style="right:1639.46px;top:625.51px;text-align:right">3,764 K</div>
<div class="m" style="right:1334.96px;top:625.51px;text-align:right">3,764 K</div>
<div class="m" style="right:1061.66px;top:625.51px;text-align:right">5</div>
<div class="m" style="left:2300.09px;top:625.51px;">Execute/Read</div>
<div class="m" style="left:2600.97px;top:625.51px;">C:\Windows\System32\shell32.dll</div>
<div class="m" style="left:3.12px;top:673.51px;">Image (ASLR)</div>
<div class="m" style="right:2878.71px;top:673.51px;text-align:right">772 K</div>
<div class="m" style="right:2651.21px;top:673.51px;text-align:right">772 K</div>
<div class="m" style="right:2464.96px;top:673.51px;text-align:right">8 K</div>
<div class="m" style="right:2251.21px;top:673.51px;text-align:right">336 K</div>
<div class="m" style="right:2001.21px;top:673.51px;text-align:right">4 K</div>
<div class="m" style="right:1639.46px;top:673.51px;text-align:right">332 K</div>
<div class="m" style="right:1334.96px;top:673.51px;text-align:right">332 K</div>
<div class="m" style="right:1061.61px;top:673.51px;text-align:right">6</div>
<div class="m" style="left:2300.09px;top:673.51px;">Execute/Read</div>
<div class="m" style="left:2600.97px;top:673.51px;">C:\Windows\System32\kernel32.dll</div>
<div class="m" style="left:3.12px;top:721.51px;">Image (ASLR)</div>
<div class="m" style="right:2878.71px;top:721.51px;text-align:right">640 K</div>
<div class="m" style="right:2651.21px;top:721.51px;text-align:right">640 K</div>
<div class="m" style="right:2464.96px;top:721.51px;text-align:right">16 K</div>
<div class="m" style="right:2251.21px;top:721.51px;text-align:right">216 K</div>
<div class="m" style="right:2001.21px;top:721.51px;text-align:right">12 K</div>
<div class="m" style="right:1639.46px;top:721.51px;text-align:right">204 K</div>
<div class="m" style="right:1334.96px;top:721.51px;text-align:right">204 K</div>
<div class="m" style="right:1061.66px;top:721.51px;text-align:right">5</div>
<div class="m" style="left:2300.09px;top:721.51px;">Execute/Read</div>
<div class="m" style="left:2600.97px;top:721.51px;">C:\Windows\System32\sechost.dll</div>
<div class="m" style="left:3.12px;top:769.51px;">Image (ASLR)</div>
<div class="m" style="right:2878.71px;top:769.51px;text-align:right">692 K</div>
<div class="m" style="right:2651.21px;top:769.51px;text-align:right">692 K</div>
<div class="m" style="right:2464.96px;top:769.51px;text-align:right">8 K</div>
<div class="m" style="right:2251.21px;top:769.51px;text-align:right">520 K</div>
<div class="m" style="right:2001.21px;top:769.51px;text-align:right">12 K</div>
<div class="m" style="right:1639.46px;top:769.51px;text-align:right">508 K</div>
<div class="m" style="right:1334.96px;top:769.51px;text-align:right">508 K</div>
<div class="m" style="right:1061.66px;top:769.51px;text-align:right">5</div>
<div class="m" style="left:2300.09px;top:769.51px;">Execute/Read</div>
<div class="m" style="left:2600.97px;top:769.51px;">C:\Windows\System32\SHCore.dll</div>
</div>
<div class="dot" style="left:38px;top:1030px;width:3738px;background-position:0 0;"></div>
<div class="dot" style="left:38px;top:1074px;width:3738px;background-position:0 0;"></div>
<div class="dot" style="left:0px;top:1030px;width:38px;background-image:linear-gradient(to right,#145214 0,#145214 2px,transparent 2px,transparent 4px);"></div>
<div class="dot" style="left:0px;top:1074px;width:38px;background-image:linear-gradient(to right,#145214 0,#145214 2px,transparent 2px,transparent 4px);"></div>
<div class="r" style="left:422px;top:1826px;width:3354px;height:2px;background:#ffffff;"></div>
<div class="r" style="left:422px;top:1828px;width:3356px;height:39px;background:#f0f0f0;"></div>
<div class="r" style="left:464px;top:1828px;width:3260px;height:38px;background:#cdcdcd;"></div>
<svg class="r" style="left:434px;top:1838px" width="14" height="18" viewBox="0 0 14 18"><polygon points="8.2,0 14,0 6.2,9 14,18 8.2,18 0,9" fill="#606060"/></svg>
<svg class="r" style="left:3747.5px;top:1838px" width="14" height="18" viewBox="0 0 14 18"><polygon points="0,0 5.8,0 14,9 5.8,18 0,18 7.8,9" fill="#606060"/></svg>
<div class="r" style="left:3776px;top:1030px;width:2px;height:836px;background:#ffffff;"></div>
<div class="r" style="left:3778px;top:1030px;width:40px;height:837px;background:#f0f0f0;"></div>
<div class="r" style="left:3818px;top:972px;width:1px;height:895px;background:#f8f8f8;"></div>
<div class="r" style="left:3778px;top:1030px;width:38px;height:26px;background:#cdcdcd;"></div>
<svg class="r" style="left:3788px;top:1798px" width="18" height="14" viewBox="0 0 18 14"><polygon points="0,0 9,7.8 18,0 18,5.6 9,14 0,5.6" fill="#606060"/></svg>
<div class="r" style="left:0px;top:1868px;width:3819px;height:2px;background:#e3e3e3;"></div>
<div class="r" style="left:0px;top:1870px;width:3819px;height:2px;background:#ffffff;"></div>
<div class="r" style="left:0px;top:1872px;width:3819px;height:19px;background:#f0f0f0;"></div>
</body></html>
